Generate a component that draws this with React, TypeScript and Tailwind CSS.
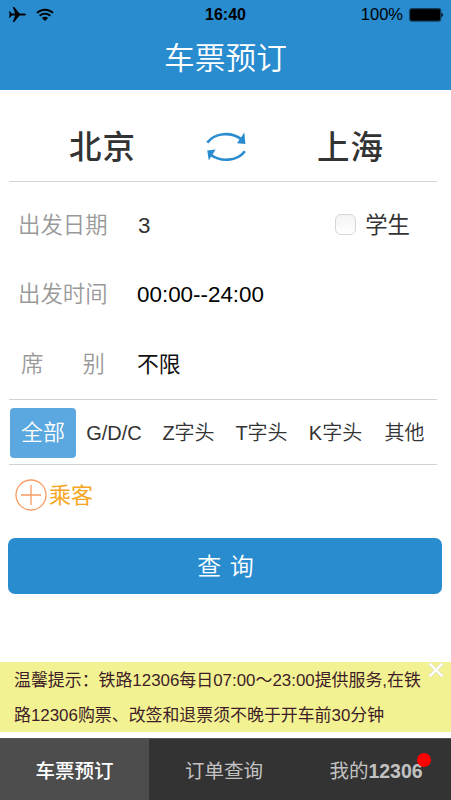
import { useState } from 'react';
import clsx from 'clsx';

const trainTypes = [
    { label: '全部', className: 'w-[66px] text-[22px]' },
    { label: 'G/D/C', className: 'w-[76px]' },
    { label: 'Z字头', className: 'w-[73px]' },
    { label: 'T字头', className: 'w-[73px]' },
    { label: 'K字头', className: 'w-[75px]' },
    { label: '其他', className: 'w-[63px]' },
]

const navItems = [
    { label: '车票预订', className: 'w-[149px]' },
    { label: '订单查询', className: 'w-[150px]' },
    { label: '我的12306', className: 'w-[152px] pl-[2px]', badge: true },
]

function StatusBar() {
    return (
        <div className="grid grid-cols-3 items-center h-[29px] px-2 text-black">
            <div className="flex items-center gap-[9px]">
                <svg width="19" height="18" viewBox="0 0 19 18" fill="currentColor">
                    <path d="M18 8.5C18 7.7 17 7.4 15.8 7.4H11.5L6.2 .9H4.7L7.2 7.4H3.6L2 5.2H1.1L1.6 8.5L1.1 11.8H2L3.6 9.6H7.2L4.7 16.1H6.2L11.5 9.6H15.8C17 9.6 18 9.3 18 8.5Z" />
                </svg>
                <svg width="18" height="14" viewBox="0 0 18 14" fill="none" stroke="currentColor" strokeWidth="2">
                    <path d="M1 4.9C5.5 .6 12.5 .6 17 4.9" />
                    <path d="M3.7 7.8C6.8 5 11.2 5 14.3 7.8" />
                    <path d="M9 13L5.9 9.9C7.7 8.4 10.3 8.4 12.1 9.9Z" fill="currentColor" stroke="none" />
                </svg>
            </div>
            <span className="text-center text-[16px] font-bold leading-none">16:40</span>
            <div className="flex items-center justify-end gap-[6px]">
                <span className="text-[16.5px] leading-none">100%</span>
                <svg width="34" height="14" viewBox="0 0 34 14">
                    <rect x=".7" y=".7" width="31" height="12.4" rx="2" fill="#000" stroke="#123f5d" strokeWidth="1.2" />
                    <path d="M32.4 4.8C34.3 5.4 34.3 8.6 32.4 9.2Z" fill="#000" />
                </svg>
            </div>
        </div>
    )
}

function SwapIcon() {
    return (
        <svg width="40" height="30" viewBox="0 0 40 30" fill="none" stroke="#298ccf" strokeWidth="2.6">
            <path d="M1.3 10.6C9 .6 25 -.8 36 7.8" />
            <path d="M38.3 .4L39.4 12L31 11.2Z" fill="#298ccf" stroke="none" />
            <path d="M38.9 19.2C31 29.3 15 30.6 4 22.2" />
            <path d="M2.8 28.4L1.2 18.6L9.6 17.6Z" fill="#298ccf" stroke="none" />
        </svg>
    )
}

export default function App() {
    const [type, setType] = useState('全部')
    const [tab, setTab] = useState('车票预订')
    const [student, setStudent] = useState(false)

    return (
        <div className="flex flex-col w-[451px] h-[800px] overflow-hidden bg-white font-['Liberation_Sans','Noto_Sans_CJK_SC',sans-serif] text-[#333]">
            <header className="h-[90px] shrink-0 bg-[#298ccf]">
                <StatusBar />
                <h1 className="text-center text-[30.7px] leading-[60px] font-[350] text-white">车票预订</h1>
            </header>

            <main className="flex flex-col h-[572px] shrink-0 pl-[9px] pr-[14px]">
                <div className="flex items-center h-[92px] pt-[22px] border-b border-[#d5d5d5] text-[32.5px] font-medium leading-[42px]">
                    <span className="w-[197px] pt-[2px] pl-[60px] tracking-[1px] whitespace-nowrap">北京</span>
                    <SwapIcon />
                    <span className="pt-[2px] pl-[71px] tracking-[1px]">上海</span>
                </div>

                <div className="h-[218px] border-b border-[#d0d0d5] text-[22.4px] leading-[30px]">
                    <div className="flex items-center h-[86px] pt-[2px]">
                        <span className="w-[128px] pl-[9px] font-[350] text-[#999]">出发日期</span>
                        <span className="pl-px">3</span>
                        <label className="flex items-center ml-auto mr-[27px]">
                            <input
                                type="checkbox"
                                checked={student}
                                onChange={() => setStudent(!student)}
                                className="appearance-none size-[21px] -mt-[3px] mr-[9px] rounded-[6px] border border-[#d6d6d6] bg-linear-to-b from-[#f3f3f3] to-white checked:bg-[#5aa8df]"
                            />
                            学生
                        </label>
                    </div>
                    <div className="flex items-center h-[52px] pt-[2px]">
                        <span className="w-[128px] pl-[9px] font-[350] text-[#999]">出发时间</span>
                        <span className="text-black">00:00--24:00</span>
                    </div>
                    <div className="flex items-center h-[79px] pt-[11px]">
                        <span className="flex justify-between w-[96px] pl-[12px] mr-[32px] font-[350] text-[#999]">
                            <span>席</span>
                            <span>别</span>
                        </span>
                        <span className="text-[21.8px] text-[#111]">不限</span>
                    </div>
                </div>

                <div className="flex items-center h-[65px] pt-[2px] pl-px border-b border-[#d0d0d5]">
                    {trainTypes.map(item => (
                        <button
                            key={item.label}
                            onClick={() => setType(item.label)}
                            className={clsx(
                                'h-[50px] shrink-0 rounded-[4px] text-[20px] leading-[30px] font-[350]',
                                item.className,
                                type === item.label && 'bg-[#5aa8df] text-white'
                            )}
                        >
                            {item.label}
                        </button>
                    ))}
                </div>

                <button className="flex items-center h-[60px] pl-[6px] gap-[2px] text-[22px] leading-[30px] text-[#f5a623]">
                    <svg width="32" height="32" viewBox="0 0 32 32" fill="none" stroke="#f99a62" strokeWidth="1.3">
                        <circle cx="16" cy="16" r="15" />
                        <path d="M6 16H26M16 6V26" />
                    </svg>
                    <span className="pt-[2px]">乘客</span>
                </button>

                <button className="w-[434px] h-[56px] mt-[13px] pt-[2px] pl-px -ml-px rounded-[7px] bg-[#298ccf] text-[24px] font-[350] leading-[30px] text-white [word-spacing:2px]">
                    查 询
                </button>
            </main>

            <div className="relative h-[70px] mb-[6px] shrink-0 pl-[14px] bg-[#f3f292] text-[16.92px] leading-[35px] text-[#3e1d28] whitespace-nowrap">
                <p className="pt-px">温馨提示：铁路12306每日07:00～23:00提供服务,在铁</p>
                <p>路12306购票、改签和退票须不晚于开车前30分钟</p>
                <button className="absolute top-0 right-[7px]">
                    <svg width="16" height="16" viewBox="0 0 16 16" fill="none" stroke="#d2d2a0" strokeWidth="3.8">
                        <path d="M1.5 1.5L14.5 14.5M14.5 1.5L1.5 14.5" />
                        <path d="M1.5 1.5L14.5 14.5M14.5 1.5L1.5 14.5" stroke="#fff" strokeWidth="2.8" />
                    </svg>
                </button>
            </div>

            <nav className="flex h-[62px] shrink-0 bg-[#333] border-t border-[#555]">
                {navItems.map(item => (
                    <button
                        key={item.label}
                        onClick={() => setTab(item.label)}
                        className={clsx(
                            'flex items-center justify-center pt-[3px] text-[19.5px] leading-[30px]',
                            item.className,
                            tab === item.label ? 'bg-[#4d4d4d] text-white font-medium' : 'text-[#c2c2c2]'
                        )}
                    >
                        <span className="relative">
                            {item.badge ? <>我的<b>12306</b></> : item.label}
                            {item.badge && <i className="absolute -top-[3px] -right-[8px] size-[14px] rounded-full bg-[#f00]" />}
                        </span>
                    </button>
                ))}
            </nav>
        </div>
    )
}
